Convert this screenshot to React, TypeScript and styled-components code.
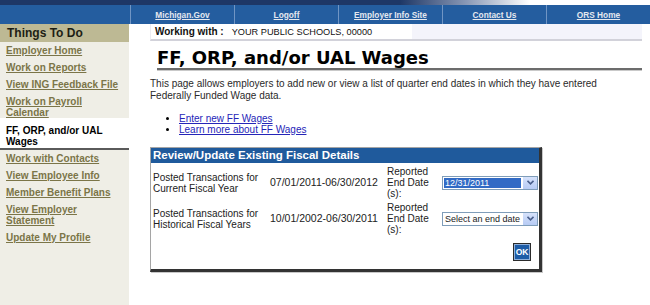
import React from 'react';
import styled, { createGlobalStyle } from 'styled-components';

const navLinks = ['Michigan.Gov', 'Logoff', 'Employer Info Site', 'Contact Us', 'ORS Home'];

const menuTop = ['Employer Home', 'Work on Reports', 'View ING Feedback File', 'Work on Payroll Calendar'];
const menuBottom = [
  'Work with Contacts',
  'View Employee Info',
  'Member Benefit Plans',
  'View Employer Statement',
  'Update My Profile',
];

interface FiscalRow {
  label: string[];
  range: string;
  value: string;
  selected: boolean;
}

const rows: FiscalRow[] = [
  {
    label: ['Posted Transactions for', 'Current Fiscal Year'],
    range: '07/01/2011-06/30/2012',
    value: '12/31/2011',
    selected: true,
  },
  {
    label: ['Posted Transactions for', 'Historical Fiscal Years'],
    range: '10/01/2002-06/30/2011',
    value: 'Select an end date',
    selected: false,
  },
];

const Chevron: React.FC = () => (
  <svg width="7" height="5" viewBox="0 0 7 5">
    <path d="M0.5 0.8 L3.5 3.8 L6.5 0.8" fill="none" stroke="#4a5f8c" strokeWidth="1.6" />
  </svg>
);

const App: React.FC = () => {
  return (
    <Page>
      <GlobalStyle />
      <TopStrip />
      <NavBar>
        <NavSpacer />
        {navLinks.map((link) => (
          <NavCell key={link}>
            <NavLink href="#">{link}</NavLink>
          </NavCell>
        ))}
      </NavBar>
      <Body>
        <Sidebar>
          <SidebarTitle>Things To Do</SidebarTitle>
          {menuTop.map((item) => (
            <MenuItem key={item}>
              <MenuLink href="#">{item}</MenuLink>
            </MenuItem>
          ))}
          <MenuCurrent>FF, ORP, and/or UAL Wages</MenuCurrent>
          {menuBottom.map((item) => (
            <MenuItem key={item}>
              <MenuLink href="#">{item}</MenuLink>
            </MenuItem>
          ))}
        </Sidebar>
        <Main>
          <WorkingBar>
            <WorkingLabel>Working with :</WorkingLabel>
            <WorkingValue>YOUR PUBLIC SCHOOLS, 00000</WorkingValue>
          </WorkingBar>
          <Title>FF, ORP, and/or UAL Wages</Title>
          <Intro>
            This page allows employers to add new or view a list of quarter end dates in which they have entered
            <br />
            Federally Funded Wage data.
          </Intro>
          <LinkList>
            <li>
              <BlueLink href="#">Enter new FF Wages</BlueLink>
            </li>
            <li>
              <BlueLink href="#">Learn more about FF Wages</BlueLink>
            </li>
          </LinkList>
          <Panel>
            <PanelHeader>Review/Update Existing Fiscal Details</PanelHeader>
            <FiscalGrid>
              {rows.map((row) => (
                <React.Fragment key={row.range}>
                  <Cell>
                    {row.label[0]}
                    <br />
                    {row.label[1]}
                  </Cell>
                  <DateCell>{row.range}</DateCell>
                  <Cell>
                    Reported
                    <br />
                    End Date
                    <br />
                    (s):
                  </Cell>
                  <SelectBox>
                    <SelectValue $selected={row.selected}>{row.value}</SelectValue>
                    <SelectButton>
                      <Chevron />
                    </SelectButton>
                  </SelectBox>
                </React.Fragment>
              ))}
            </FiscalGrid>
            <PanelFooter>
              <OkButton>OK</OkButton>
            </PanelFooter>
          </Panel>
        </Main>
      </Body>
    </Page>
  );
};

export default App;

const GlobalStyle = createGlobalStyle`
  body {
    margin: 0;
    background: #ffffff;
    font-family: "Liberation Sans", Arial, sans-serif;
  }
`;

const Page = styled.div`
  width: 650px;
  height: 305px;
  overflow: hidden;
  display: flex;
  flex-direction: column;
`;

const TopStrip = styled.div`
  height: 5px;
  background: linear-gradient(to right, #1e3766 0, #1e3766 400px, #8796b4 465px, #ffffff 530px);
`;

const NavBar = styled.div`
  display: flex;
  height: 19px;
  background: #245d9f;
`;

const NavSpacer = styled.div`
  width: 130px;
`;

const NavCell = styled.div`
  flex: 1;
  display: flex;
  align-items: center;
  justify-content: center;
  border-left: 1px solid #7095c4;
  font-size: 8px;
`;

const NavLink = styled.a`
  color: #e4e8ef;
  font-size: 8.3px;
  font-weight: bold;
  text-decoration: underline;
`;

const Body = styled.div`
  flex: 1;
  display: flex;
`;

const Sidebar = styled.div`
  width: 129px;
  background: #efeee6;
`;

const SidebarTitle = styled.div`
  height: 18px;
  line-height: 18px;
  padding-left: 7px;
  background: #bdb994;
  color: #1e1e14;
  font-size: 12px;
  font-weight: bold;
`;

const MenuItem = styled.div`
  padding: 3px 6px;
  font-size: 10px;
  line-height: 11px;
`;

const MenuLink = styled.a`
  color: #7b7548;
  font-weight: bold;
  text-decoration: underline;
`;

const MenuCurrent = styled.div`
  margin-top: -3px;
  padding: 7px 6px 1px;
  line-height: 11px;
  background: #ffffff;
  border-bottom: 2px solid #5a5a5a;
  color: #000000;
  font-size: 10px;
  font-weight: bold;
`;

const Main = styled.div`
  flex: 1;
  padding: 0 8px 0 21px;
`;

const WorkingBar = styled.div`
  display: flex;
  align-items: center;
  height: 15px;
  padding-left: 4px;
  border-left: 1px solid #ececf2;
  border-bottom: 2px solid #d2d2da;
  background: linear-gradient(to right, #ffffff 261px, #f4f4fb 261px);
`;

const WorkingLabel = styled.span`
  color: #111111;
  font-size: 10px;
  font-weight: bold;
`;

const WorkingValue = styled.span`
  margin-left: 8px;
  color: #111111;
  font-size: 9.2px;
`;

const Title = styled.h1`
  margin: 0 0 0 7px;
  padding-top: 7px;
  line-height: 20px;
  font-family: "DejaVu Sans", Verdana, sans-serif;
  font-size: 18px;
  font-weight: bold;
  color: #000000;
  border-bottom: 2px solid #6c6c6c;
  box-shadow: 0 1px 0 #c9c9c9;
`;

const Intro = styled.p`
  margin: 8px 0 0;
  font-size: 10px;
  line-height: 12px;
  color: #2a2a2a;
  white-space: nowrap;
`;

const LinkList = styled.ul`
  margin: 11px 0 0;
  padding-left: 29px;
  font-size: 10px;
  line-height: 11px;
  list-style: disc;
`;

const BlueLink = styled.a`
  color: #2525b8;
  text-decoration: underline;
`;

const Panel = styled.div`
  width: 388px;
  margin-top: 12px;
  border-top: 1px solid #a5a5a5;
  border-left: 1px solid #a5a5a5;
  border-right: 3px solid #333333;
  border-bottom: 3px solid #333333;
  box-shadow: 1px 1px 0 #c8c8c8;
`;

const PanelHeader = styled.div`
  height: 15px;
  line-height: 15px;
  padding-left: 2px;
  background: #1f5a9c;
  color: #ffffff;
  font-size: 11.5px;
  font-weight: bold;
`;

const FiscalGrid = styled.div`
  display: grid;
  grid-template-columns: 117px 117px 55px 96px;
  row-gap: 3px;
  align-items: center;
  margin-top: 3px;
  padding-left: 2px;
`;

const Cell = styled.div`
  font-size: 10px;
  line-height: 11px;
  color: #222222;
`;

const DateCell = styled(Cell)`
  font-size: 10.5px;
`;

const SelectBox = styled.div`
  display: flex;
  align-items: stretch;
  height: 14px;
  border: 1px solid #7f9db9;
  background: #ffffff;
  box-sizing: border-box;
`;

const SelectValue = styled.div<{ $selected: boolean }>`
  flex: 1;
  margin: 1px;
  padding-left: 1px;
  font-size: 9px;
  line-height: 10px;
  color: ${(p) => (p.$selected ? '#ffffff' : '#222222')};
  background: ${(p) => (p.$selected ? '#316ac5' : 'transparent')};
  white-space: nowrap;
  overflow: hidden;
`;

const SelectButton = styled.div`
  width: 14px;
  display: flex;
  align-items: center;
  justify-content: center;
  background: linear-gradient(#d6e2fb, #b7cbf4);
  border-left: 1px solid #ffffff;
`;

const PanelFooter = styled.div`
  display: flex;
  justify-content: flex-end;
  padding: 8px 8px 8px 0;
`;

const OkButton = styled.button`
  width: 18px;
  height: 18px;
  padding: 0;
  border: 1px solid #2b2b2b;
  box-shadow: inset 0 0 0 1px #8fb0da;
  background: #1d5ca7;
  color: #ffffff;
  font-family: "Liberation Sans", Arial, sans-serif;
  font-size: 8.5px;
  font-weight: bold;
`;
